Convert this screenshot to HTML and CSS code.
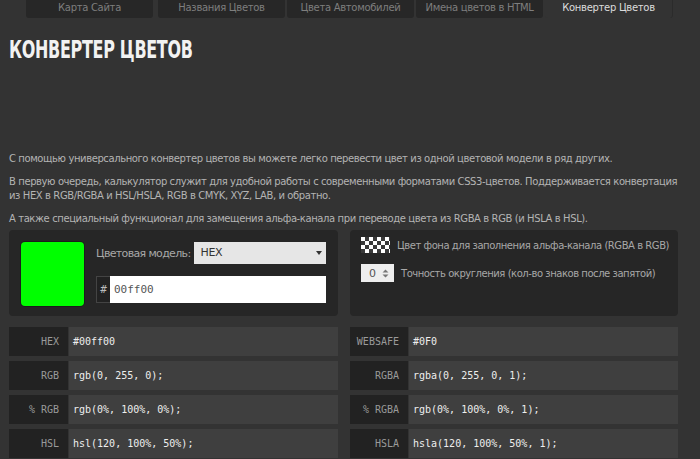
FILE: index.html
```html
<!DOCTYPE html>
<html>
<head>
    <link rel="stylesheet" href="styles.css">
</head>
<body>
    <div class="tabs">
        <a href="#" class="tab first">Карта Сайта</a>
        <a href="#" class="tab">Названия Цветов</a>
        <a href="#" class="tab">Цвета Автомобилей</a>
        <a href="#" class="tab">Имена цветов в HTML</a>
        <a href="#" class="tab active">Конвертер Цветов</a>
    </div>

    <div class="page">
        <div class="title-box">
            <h1 class="title">КОНВЕРТЕР ЦВЕТОВ</h1>
        </div>

        <div class="intro">
            <p>С помощью универсального конвертер цветов вы можете легко перевести цвет из одной цветовой модели в ряд других.</p>
            <p>В первую очередь, калькулятор служит для удобной работы с современными форматами CSS3-цветов. Поддерживается конвертация из HEX в RGB/RGBA и HSL/HSLA, RGB в CMYK, XYZ, LAB, и обратно.</p>
            <p>А также специальный функционал для замещения альфа-канала при переводе цвета из RGBA в RGB (и HSLA в HSL).</p>
        </div>

        <div class="grid">
            <div class="panel picker">
                <div class="swatch"></div>
                <div class="picker-fields">
                    <div class="model-row">
                        <span class="model-label">Цветовая модель:</span>
                        <div class="select">HEX<span class="select-arrow"></span></div>
                    </div>
                    <div class="hex-row">
                        <span class="hash">#</span>
                        <div class="hex-input">00ff00</div>
                    </div>
                </div>
            </div>

            <div class="panel options">
                <div class="option-row">
                    <div class="checker"></div>
                    <span>Цвет фона для заполнения альфа-канала (RGBA в RGB)</span>
                </div>
                <div class="option-row">
                    <div class="spinner">0
                        <svg width="7" height="9" viewBox="0 0 7 9"><path d="M3.5 0.5 L6.5 3.5 H0.5 Z M3.5 8.5 L6.5 5.5 H0.5 Z" fill="#777"/></svg>
                    </div>
                    <span>Точность округления (кол-во знаков после запятой)</span>
                </div>
            </div>

            <div class="results">
                <div class="row"><div class="label">HEX</div><div class="value">#00ff00</div></div>
                <div class="row"><div class="label">RGB</div><div class="value">rgb(0, 255, 0);</div></div>
                <div class="row"><div class="label">% RGB</div><div class="value">rgb(0%, 100%, 0%);</div></div>
                <div class="row"><div class="label">HSL</div><div class="value">hsl(120, 100%, 50%);</div></div>
            </div>

            <div class="results right">
                <div class="row"><div class="label">WEBSAFE</div><div class="value">#0F0</div></div>
                <div class="row"><div class="label">RGBA</div><div class="value">rgba(0, 255, 0, 1);</div></div>
                <div class="row"><div class="label">% RGBA</div><div class="value">rgb(0%, 100%, 0%, 1);</div></div>
                <div class="row"><div class="label">HSLA</div><div class="value">hsla(120, 100%, 50%, 1);</div></div>
            </div>
        </div>
    </div>
</body>
</html>
```

FILE: styles.css
```css
body {
    margin: 0;
    background-color: #333333;
    font-family: "DejaVu Sans", Verdana, sans-serif;
    color: #b4b4b4;
}

/* top menu */
.tabs {
    display: flex;
    height: 18px;
    padding-left: 26px;
    gap: 2px;
}
.tab {
    width: 127px;
    height: 18px;
    line-height: 16px;
    background-color: #272727;
    border-radius: 0 0 3px 3px;
    color: #7e7e7e;
    font-size: 10px;
    letter-spacing: -0.3px;
    text-align: center;
    text-decoration: none;
}
.tab.first {
    margin-right: 3px;
}
.tab.active {
    background-color: #333333;
    color: #dcdcdc;
    border-right: 1px solid #2b2b2b;
}

.page {
    padding: 0 22px 0 9px;
}

/* heading, the font here is wider than the narrow original so it is squeezed */
.title-box {
    height: 134px;
    padding-top: 17px;
    box-sizing: border-box;
}
.title {
    display: inline-block;
    margin: 0;
    font-size: 25px;
    font-weight: bold;
    color: #f2f2f2;
    letter-spacing: -0.5px;
    transform: scaleX(0.64);
    transform-origin: left center;
}

.intro p {
    margin: 0 0 9px 0;
    font-size: 10px;
    letter-spacing: -0.4px;
    line-height: 14px;
}
.intro p:last-child {
    margin-bottom: 0;
}

.grid {
    display: grid;
    grid-template-columns: 329px 328px;
    column-gap: 12px;
    row-gap: 11px;
    margin-top: 4px;
}

.panel {
    height: 86px;
    background-color: #262626;
    border-radius: 4px;
    box-sizing: border-box;
}

.picker {
    display: flex;
    gap: 12px;
    padding: 12px;
}
.swatch {
    width: 63px;
    height: 64px;
    background-color: #00ff00;
    border-radius: 4px;
    box-shadow: 0 0 0 1px #1c1c1c;
}
.picker-fields {
    flex: 1;
    display: flex;
    flex-direction: column;
    gap: 12px;
}
.model-row {
    display: flex;
    align-items: center;
    gap: 3px;
}
.model-label {
    font-size: 11px;
    letter-spacing: -0.65px;
    color: #a8a8a8;
}
.select {
    flex: 1;
    position: relative;
    height: 22px;
    line-height: 22px;
    padding-left: 7px;
    background-color: #e6e6e6;
    color: #333;
    font-size: 11px;
    letter-spacing: -0.3px;
}
.select-arrow {
    position: absolute;
    right: 4px;
    top: 9px;
    border-left: 3px solid transparent;
    border-right: 3px solid transparent;
    border-top: 4px solid #333;
}
.hex-row {
    display: flex;
    height: 27px;
}
.hash {
    width: 13px;
    border: 1px solid #444;
    border-right: none;
    background-color: #222;
    color: #bbb;
    font-family: "DejaVu Sans Mono", monospace;
    font-size: 11px;
    line-height: 25px;
    text-align: center;
}
.hex-input {
    flex: 1;
    background-color: #ffffff;
    color: #555;
    padding-left: 4px;
    font-family: "DejaVu Sans Mono", monospace;
    font-size: 11px;
    line-height: 27px;
}

.options {
    padding: 7px 9px 7px 11px;
    display: flex;
    flex-direction: column;
    gap: 11px;
}
.option-row {
    display: flex;
    align-items: center;
    gap: 7px;
    font-size: 10px;
    letter-spacing: -0.45px;
    white-space: nowrap;
    color: #a8a8a8;
}
.checker {
    width: 33px;
    height: 16px;
    background-color: #ffffff;
    background-image: conic-gradient(#3a3a3a 25%, #ffffff 0 50%, #3a3a3a 0 75%, #ffffff 0);
    background-size: 8px 8px;
}
.spinner {
    width: 33px;
    height: 18px;
    box-sizing: border-box;
    padding: 0 5px 0 8px;
    display: flex;
    align-items: center;
    justify-content: space-between;
    background-color: #eeeeee;
    color: #555;
    font-size: 11px;
}

.results {
    display: flex;
    flex-direction: column;
    gap: 5px;
}
.row {
    display: flex;
    height: 29px;
    font-family: "DejaVu Sans Mono", monospace;
    font-size: 10px;
}
.label {
    width: 50px;
    padding-right: 9px;
    background-color: #222222;
    color: #9a9a9a;
    text-align: right;
    line-height: 29px;
    margin-right: 1px;
}
.results.right .label {
    width: 49px;
}
.value {
    flex: 1;
    background-color: #3f3f3f;
    color: #eeeeee;
    padding-left: 4px;
    line-height: 29px;
}
```
